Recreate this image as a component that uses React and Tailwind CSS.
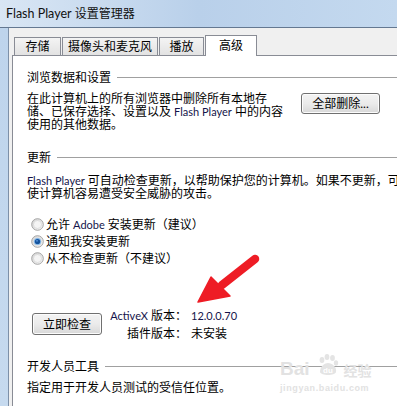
import React from 'react';

const Radio = ({ checked }) => (
    <svg width="13" height="13" viewBox="0 0 13 13" className="shrink-0">
        <defs>
            <linearGradient id={checked ? 'rg1' : 'rg0'} x1="0" y1="0" x2="1" y2="1">
                <stop offset="0" stopColor="#d4d4d4" />
                <stop offset="1" stopColor="#fafafa" />
            </linearGradient>
        </defs>
        <circle cx="6.5" cy="6.5" r="5.8" fill={`url(#${checked ? 'rg1' : 'rg0'})`} stroke="#9a9a9a" strokeWidth="0.9" />
        <circle cx="6.5" cy="6.5" r="4" fill="#f4f4f4" stroke="#d0d0d0" strokeWidth="0.6" />
        {checked && (
            <>
                <circle cx="6.5" cy="6.5" r="3.6" fill="#7fb4e6" />
                <circle cx="6.5" cy="6.5" r="2.6" fill="#14539c" />
                <circle cx="6" cy="5.8" r="1" fill="#4a8ad4" />
            </>
        )}
    </svg>
);

const SectionTitle = ({ children, lineGap = 'ml-[6px]' }) => (
    <div className="flex items-center h-[13px]">
        <span className="whitespace-nowrap">{children}</span>
        <div className={`flex-1 h-px bg-[#a0a0a0] ${lineGap}`} />
    </div>
);

const Btn = ({ children, className }) => (
    <div className={`flex items-center justify-center border border-[#707070] rounded-[3px] bg-gradient-to-b from-[#f3f3f3] via-[#ebebeb] to-[#d8d8d8] shadow-[inset_0_0_0_1px_#fcfcfc] ${className}`}>
        {children}
    </div>
);

const App = () => {
    return (
        <div className="relative w-[397px] h-[406px] overflow-hidden flex flex-col font-['Lato','Noto_Sans_CJK_SC',sans-serif] text-[12px] leading-[13px] text-black">
            {/* title bar */}
            <div className="h-[28px] shrink-0 flex items-center pl-[6px] border-b border-[#647891] bg-gradient-to-r from-[#d9e6f4] via-[#b9d0ea] to-[#c4d9ef]">
                <span className="text-[12px] text-[#111]">
                    <span className="text-[12.5px]">Flash Player</span> 设置管理器
                </span>
            </div>

            <div className="flex flex-1 min-h-0">
                {/* left window frame */}
                <div className="w-[9px] shrink-0 bg-gradient-to-b from-[#bed4ec] to-[#c6daef] border-r border-[#7d90a8]" />

                <div className="flex-1 flex flex-col bg-[#f0f0f0] pl-[3px] min-w-0">
                    {/* tabs */}
                    <div className="h-[27px] shrink-0 flex items-end pl-[2px]">
                        <div className="w-[47px] h-[18px] border border-b-0 border-[#898c95] bg-gradient-to-b from-[#f4f4f4] to-[#e2e2e2] flex items-center justify-center">存储</div>
                        <div className="w-[96px] h-[18px] ml-px border border-b-0 border-[#898c95] bg-gradient-to-b from-[#f4f4f4] to-[#e2e2e2] flex items-center justify-center">摄像头和麦克风</div>
                        <div className="w-[45px] h-[18px] ml-px border border-b-0 border-[#898c95] bg-gradient-to-b from-[#f4f4f4] to-[#e2e2e2] flex items-center justify-center">播放</div>
                        <div className="relative z-10 -mb-px w-[52px] h-[21px] ml-px border border-b-0 border-[#898c95] bg-white flex items-center justify-center pb-[2px]">高级</div>
                    </div>

                    {/* panel */}
                    <div className="flex-1 bg-white border-l border-t border-[#898c95] pl-[14px] pt-[15px] min-w-0">
                        <SectionTitle>浏览数据和设置</SectionTitle>

                        <div className="flex mt-[8px]">
                            <p className="w-[274px] shrink-0 whitespace-nowrap">
                                在此计算机上的所有浏览器中删除所有本地存<br />
                                储、已保存选择、设置以及 <span className="text-[11px] text-[#14144a]">Flash Player</span> 中的内容<br />
                                使用的其他数据。
                            </p>
                            <Btn className="w-[79px] h-[21px] mt-[1px]">全部删除...</Btn>
                        </div>

                        <div className="mt-[20px]">
                            <SectionTitle>更新</SectionTitle>
                        </div>

                        <p className="mt-[10px] whitespace-nowrap">
                            <span className="text-[11px] text-[#14144a]">Flash Player</span> 可自动检查更新，以帮助保护您的计算机。如果不更新，可<br />
                            使计算机容易遭受安全威胁的攻击。
                        </p>

                        <div className="mt-[16px] flex flex-col pl-[4px]">
                            <label className="h-[17px] flex items-center gap-[2px]">
                                <Radio />
                                <span>允许 <span className="text-[11px] text-[#14144a]">Adobe</span> 安装更新（建议）</span>
                            </label>
                            <label className="h-[17px] flex items-center gap-[2px]">
                                <Radio checked />
                                <span>通知我安装更新</span>
                            </label>
                            <label className="h-[17px] flex items-center gap-[2px]">
                                <Radio />
                                <span>从不检查更新（不建议）</span>
                            </label>
                        </div>

                        <div className="mt-[40px] flex items-start">
                            <Btn className="ml-[5px] mt-[6px] w-[70px] h-[22px]">立即检查</Btn>
                            <div className="grid grid-cols-[80px_auto] gap-x-[4px] ml-[5px] leading-[18px]">
                                <span className="text-right whitespace-nowrap"><span className="text-[11px] text-[#14144a]">ActiveX</span> 版本：</span>
                                <span className="text-[11px] text-[#14144a]">12.0.0.70</span>
                                <span className="text-right">插件版本：</span>
                                <span>未安装</span>
                            </div>
                        </div>

                        <div className="mt-[17px]">
                            <SectionTitle>开发人员工具</SectionTitle>
                        </div>
                        <p className="mt-[8px] whitespace-nowrap">指定用于开发人员测试的受信任位置。</p>
                    </div>
                </div>
            </div>

            {/* baidu watermark */}
            <div className="absolute left-[280px] top-[352px] pointer-events-none select-none text-[#e2e2e2]">
                <div className="flex items-end h-[26px]">
                    <span className="font-['Liberation_Sans',sans-serif] font-bold text-[19px] leading-[19px]">Bai</span>
                    <svg width="24" height="24" viewBox="0 0 24 24" className="ml-[6px] mb-[1px]">
                        <g fill="#e4e4e4">
                            <ellipse cx="6" cy="7" rx="2.4" ry="3" />
                            <ellipse cx="11" cy="4" rx="2.4" ry="3" />
                            <ellipse cx="16.5" cy="5" rx="2.4" ry="3" />
                            <ellipse cx="20" cy="10" rx="2.2" ry="2.8" />
                            <path d="M4 19 C4 13 9 10 12 10 C16 10 21 14 20 19 C19 23 5 23 4 19 Z" />
                        </g>
                        <text x="12" y="20" textAnchor="middle" fontSize="8" fontWeight="bold" fill="#fff" fontFamily="Liberation Sans, sans-serif">du</text>
                    </svg>
                    <span className="ml-[4px] text-[14px] leading-[15px] font-bold font-['Noto_Sans_CJK_SC',sans-serif]">经验</span>
                </div>
                <div className="mt-[6px] text-[9px] leading-[9px] font-['Liberation_Sans',sans-serif] font-bold tracking-[0.6px]">jingyan.baidu.com</div>
            </div>

            {/* red annotation arrow */}
            <svg className="absolute left-0 top-0 pointer-events-none" width="397" height="406" viewBox="0 0 397 406">
                <line x1="255" y1="259" x2="222" y2="285" stroke="#ee1c25" strokeWidth="8.5" strokeLinecap="round" />
                <polygon points="198,302 211,277 230,296" fill="#ee1c25" stroke="#ee1c25" strokeWidth="1.5" strokeLinejoin="round" />
            </svg>
        </div>
    );
};

export default App;
